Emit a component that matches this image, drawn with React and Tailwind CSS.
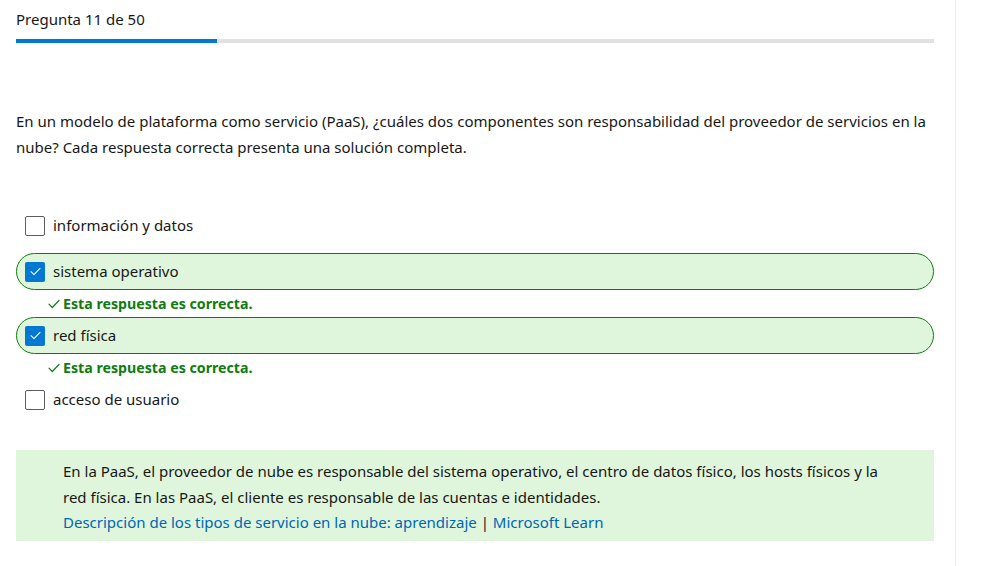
import React from "react";

function CheckIcon({ className }) {
  return (
    <svg viewBox="0 0 12 10" className={className} fill="none" stroke="currentColor" strokeWidth="1.2" strokeLinecap="round" strokeLinejoin="round">
      <path d="M1 5.2 L4.3 8.5 L11 1.5" />
    </svg>
  );
}

function Checkbox({ checked }) {
  if (checked) {
    return (
      <div className="w-5 h-5 rounded-[2px] bg-[#0078d4] flex items-center justify-center shrink-0">
        <CheckIcon className="w-[11px] h-[9px] text-white" />
      </div>
    );
  }
  return <div className="w-5 h-5 rounded-[2px] border border-[#605e5c] bg-white shrink-0" />;
}

function Option({ label, checked, correct, className = "" }) {
  return (
    <div
      className={
        "h-[37px] flex items-center gap-2 pl-[8px] rounded-full border " +
        (correct ? "border-[#107c10] bg-[#dff6dd] " : "border-transparent ") +
        className
      }
    >
      <Checkbox checked={checked} />
      <span className="text-[15px] text-[#171717]">{label}</span>
    </div>
  );
}

function Feedback() {
  return (
    <div className="h-[27px] flex items-center pl-[32px] gap-[3px] text-[#107c10]">
      <CheckIcon className="w-[12px] h-[10px]" />
      <span className="text-[14.2px] font-bold">Esta respuesta es correcta.</span>
    </div>
  );
}

export default function App() {
  return (
    <div className="w-[996px] h-[566px] bg-white flex font-['Noto_Sans',sans-serif] text-[#171717] overflow-hidden">
      <div className="w-[955px] pl-4 pr-[21px] pt-[9px]">
        <div className="text-[15px] leading-5">Pregunta 11 de 50</div>
        <div className="mt-[10px] h-[4px] bg-[#e1e1e1] flex">
          <div className="w-[201px] bg-[#0078d4]" />
        </div>
        <p className="mt-[65px] text-[15px] leading-[26px]">
          En un modelo de plataforma como servicio (PaaS), ¿cuáles dos componentes son responsabilidad del proveedor de servicios en la
          <br />
          nube? Cada respuesta correcta presenta una solución completa.
        </p>
        <div className="mt-[47px] flex flex-col">
          <Option label="información y datos" className="mb-[9px]" />
          <Option label="sistema operativo" checked correct />
          <Feedback />
          <Option label="red física" checked correct />
          <Feedback />
          <Option label="acceso de usuario" />
        </div>
        <div className="mt-[32px] bg-[#dff6dd] pl-[47px] pt-2 pb-[6px] text-[15px] leading-[26px]">
          <p>
            En la PaaS, el proveedor de nube es responsable del sistema operativo, el centro de datos físico, los hosts físicos y la
            <br />
            red física. En las PaaS, el cliente es responsable de las cuentas e identidades.
          </p>
          <p className="leading-[25px]">
            <span className="text-[#0065b3]">Descripción de los tipos de servicio en la nube: aprendizaje</span>
            <span> | </span>
            <span className="text-[#0065b3]">Microsoft Learn</span>
          </p>
        </div>
      </div>
      <div className="w-px bg-[#ececec]" />
      <div className="flex-1" />
    </div>
  );
}
